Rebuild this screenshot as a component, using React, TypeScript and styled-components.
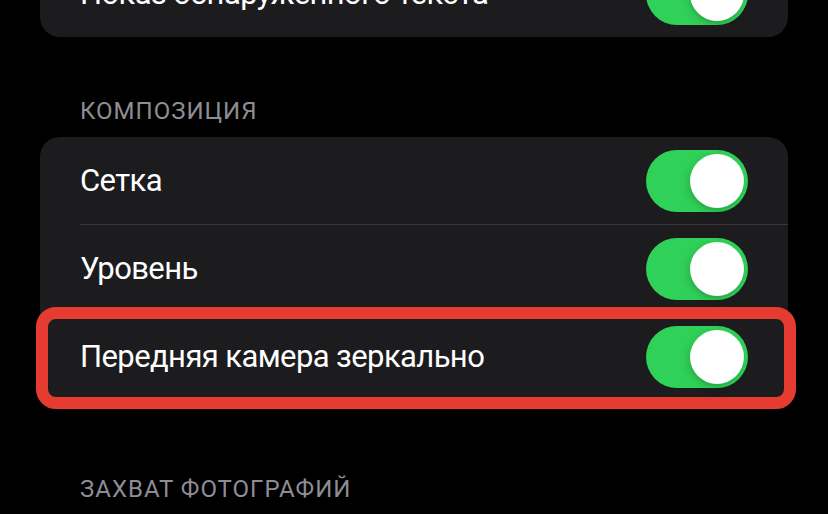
import React from "react";
import styled, { createGlobalStyle, css } from "styled-components";

const GlobalStyle = createGlobalStyle`
  html, body {
    margin: 0;
    padding: 0;
    background: #000;
    overflow: hidden;
  }
  body {
    font-family: "Roboto", "Liberation Sans", sans-serif;
    -webkit-font-smoothing: antialiased;
  }
`;

const Screen = styled.div`
  width: 828px;
  height: 514px;
  overflow: hidden;
  background: #000;
`;

// content is scrolled: the first row sits partly above the top edge
const Scroller = styled.div`
  display: flex;
  flex-direction: column;
  margin-top: -50px;
  padding: 0 40px;
`;

const SectionHeader = styled.div<{ $top: number }>`
  margin: ${(p) => p.$top}px 0 14px;
  padding-left: 40px;
  font-size: 24px;
  line-height: 24px;
  color: #8d8d93;
  text-transform: uppercase;
  letter-spacing: 1px;
`;

const Card = styled.div`
  display: flex;
  flex-direction: column;
  background: #1c1c1e;
  border-radius: 20px;
`;

const Row = styled.div<{ $highlighted?: boolean; $last?: boolean }>`
  position: relative;
  display: flex;
  align-items: center;
  justify-content: space-between;
  height: 87px;
  padding: 0 40px;

  ${(p) =>
    !p.$last &&
    css`
      &::before {
        content: "";
        position: absolute;
        left: 40px;
        right: 0;
        bottom: -1px;
        height: 1px;
        background: #38383a;
      }
      margin-bottom: 1px;
    `}

  ${(p) =>
    p.$highlighted &&
    css`
      &::after {
        content: "";
        position: absolute;
        top: -6px;
        left: -4px;
        right: -8px;
        bottom: -9px;
        border: 12px solid #e53b31;
        border-radius: 20px;
        pointer-events: none;
      }
    `}
`;

const Label = styled.span`
  font-size: 31px;
  color: #fff;
  letter-spacing: -0.6px;
`;

const Track = styled.div<{ $on: boolean }>`
  position: relative;
  flex: none;
  width: 102px;
  height: 62px;
  border-radius: 31px;
  background: ${(p) => (p.$on ? "#30d158" : "#39393d")};
`;

const Knob = styled.div<{ $on: boolean }>`
  position: absolute;
  top: 4px;
  left: ${(p) => (p.$on ? "44px" : "4px")};
  width: 54px;
  height: 54px;
  border-radius: 50%;
  background: #fff;
  box-shadow: -2px 3px 8px rgba(0, 0, 0, 0.15), 0 3px 1px rgba(0, 0, 0, 0.06);
`;

const Toggle = ({ on }: { on: boolean }) => (
  <Track $on={on}>
    <Knob $on={on} />
  </Track>
);

type Item = { label: string; on: boolean; highlighted?: boolean };

const composition: Item[] = [
  { label: "Сетка", on: true },
  { label: "Уровень", on: true },
  { label: "Передняя камера зеркально", on: true, highlighted: true },
];

export default function App() {
  return (
    <Screen>
      <GlobalStyle />
      <Scroller>
        <Card>
          <Row $last>
            <Label>Показ обнаруженного текста</Label>
            <Toggle on />
          </Row>
        </Card>

        <SectionHeader $top={62}>Композиция</SectionHeader>
        <Card>
          {composition.map((item, i) => (
            <Row
              key={item.label}
              $highlighted={item.highlighted}
              $last={i === composition.length - 1}
            >
              <Label>{item.label}</Label>
              <Toggle on={item.on} />
            </Row>
          ))}
        </Card>

        <SectionHeader $top={77}>Захват фотографий</SectionHeader>
      </Scroller>
    </Screen>
  );
}
